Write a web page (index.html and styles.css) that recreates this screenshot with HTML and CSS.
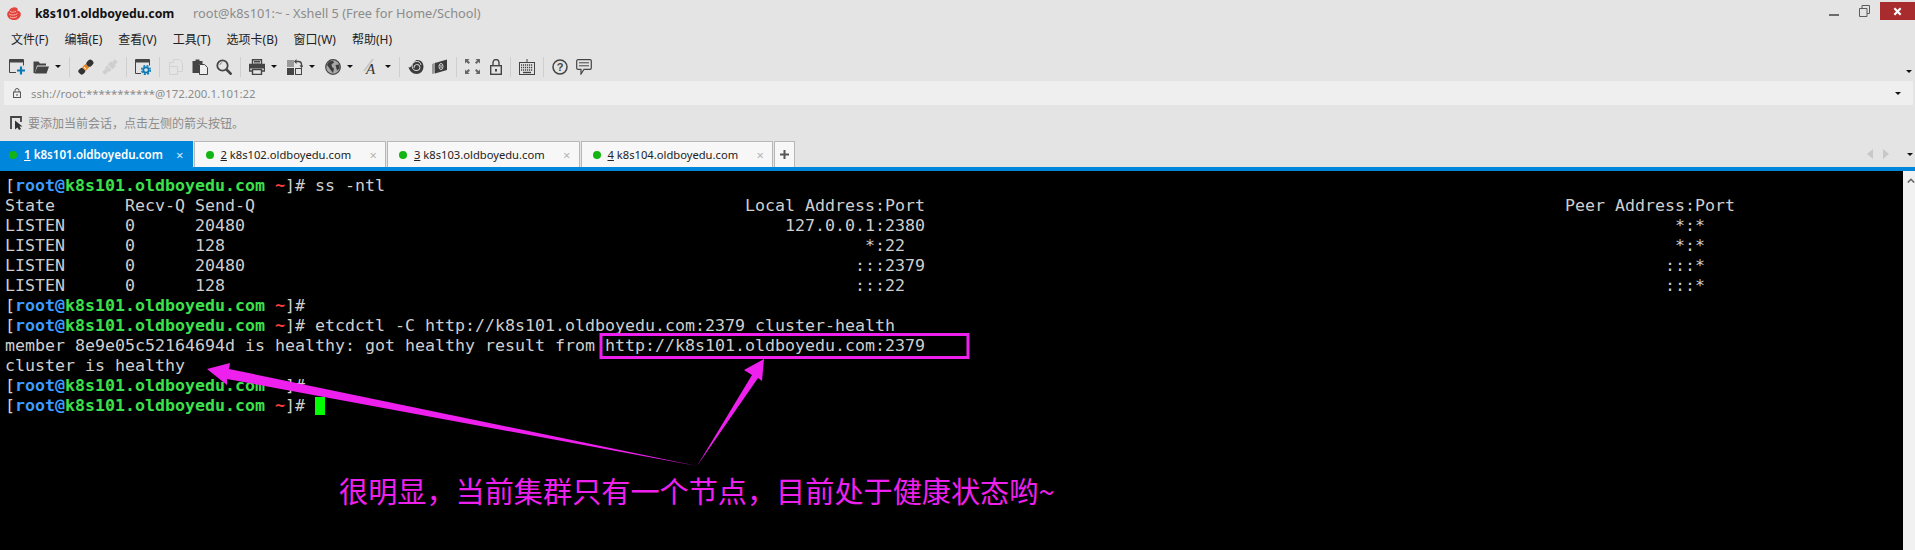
FILE: index.html
```html
<!DOCTYPE html>
<html lang="zh-CN">
<head>
<meta charset="utf-8">
<title>Xshell 5</title>
<link rel="stylesheet" href="styles.css">
</head>
<body>
<div class="app">
  <header class="titlebar">
    <svg class="logo" viewBox="0 0 16 16"><path d="M3 5C4 1.500 9 .5 11 2c1 .8 1 2 .3 2.700 2.500 0 3.700 1.800 3.500 3.800C14.500 12 11 14.500 7 14 3.500 13.500 1 11 1.200 8 1.300 6.500 2 5.500 3 5z" fill="#e2453e"/><path d="M3 8c2 1.500 6 1.500 8.500-.5M4 5.500c2 1 4 .8 6-.3M4 11c2 1 5 1 7-.5" stroke="#f7b0a8" fill="none" stroke-width="1"/></svg>
    <span class="host-title">k8s101.oldboyedu.com</span>
    <span class="window-title">root@k8s101:~ - Xshell 5 (Free for Home/School)</span>
    <div class="window-controls">
      <svg class="win-min" viewBox="0 0 10 12"><rect x="0" y="8" width="10" height="2" fill="#6b6b6b"/></svg>
      <svg class="win-restore" viewBox="0 0 11 12"><path d="M.5 3.500h7.500v8H.5zM3 3.500V.5h7.500v8H8" fill="none" stroke="#5c5c5c"/></svg>
      <div class="win-close"><svg viewBox="0 0 10 10"><path d="M1.500 1.500l7 7M8.500 1.500l-7 7" stroke="#fff" stroke-width="2.400"/></svg></div>
    </div>
  </header>

  <nav class="menubar">
    <span>文件(F)</span><span>编辑(E)</span><span>查看(V)</span><span>工具(T)</span><span>选项卡(B)</span><span>窗口(W)</span><span>帮助(H)</span>
  </nav>

  <div class="toolbar">
    <svg class="ic" viewBox="0 0 16 16"><path d="M.5 13.500V.5h14v6M.5 13.500H7" fill="none" stroke="#444"/><rect x="1" y="1" width="13" height="2.500" fill="#444"/><path d="M12 7.500v8M8 11.500h8" stroke="#0b78b6" stroke-width="2.200"/></svg>
    <svg class="ic" viewBox="0 0 16 16"><path d="M.5 14V2.500h5l1.500 2h6v2H4L1.800 14z" fill="#444"/><path d="M4.500 7.500H16L13.500 14.500H1.500z" fill="#444"/></svg>
    <i class="caret"></i><i class="sep"></i>
    <svg class="ic" viewBox="0 0 16 16"><g transform="rotate(-45 8 8)"><rect x="-1" y="5" width="6" height="6" rx="2" fill="#333"/><rect x="5" y="5.500" width="5" height="5" fill="#e8851f"/><rect x="10" y="5" width="7" height="6" rx="2.500" fill="#333"/><path d="M6.500 6.500v3" stroke="#fff"/></g></svg>
    <svg class="ic" viewBox="0 0 16 16"><g transform="rotate(-45 8 8)" fill="#cfcfcf"><rect x="-1" y="6" width="5" height="4"/><rect x="4" y="5" width="3" height="6"/><rect x="8" y="4.500" width="5" height="7" rx="1"/><rect x="13" y="6" width="4" height="4"/></g></svg>
    <i class="sep"></i>
    <svg class="ic" viewBox="0 0 16 16"><path d="M.5 14.500V.5h14v6M.5 14.500H6" fill="none" stroke="#444"/><rect x="1" y="1" width="13" height="2.500" fill="#444"/><circle cx="11" cy="11" r="2.700" fill="none" stroke="#0b78b6" stroke-width="1.800"/><circle cx="11" cy="11" r="4.300" fill="none" stroke="#0b78b6" stroke-width="1.500" stroke-dasharray="2 1.400"/></svg>
    <i class="sep"></i>
    <svg class="ic" viewBox="0 0 16 16"><path d="M1.500 3.500h4v-3h6l3 3v9h-5M1.500 3.500v12h8v-8h-8" fill="none" stroke="#d2d2d2" stroke-width="1"/></svg>
    <svg class="ic" viewBox="0 0 16 16"><path d="M.5 2h3V.5h4V2h3v3H7v9H.5z" fill="#444"/><path d="M7.500 5.500h5l3 3v7h-8z" fill="#eee" stroke="#444"/></svg>
    <svg class="ic" viewBox="0 0 16 16"><circle cx="6.500" cy="6.500" r="5.200" fill="none" stroke="#444" stroke-width="1.800"/><path d="M10.500 10.500L15.500 15.500" stroke="#444" stroke-width="2.600"/><path d="M3.800 6a3 3 0 0 1 2.500-2.500" stroke="#888" fill="none"/></svg>
    <i class="sep"></i>
    <svg class="ic" viewBox="0 0 16 16"><path d="M3.500 5V.8h9V5M3.500 12H.5V5.500h15V12h-3" fill="none" stroke="#444" stroke-width="1.400"/><path d="M5 2.500h6M5 4h6" stroke="#444"/><rect x="1" y="6" width="14" height="3.500" fill="#444"/><path d="M3.500 10.500h9v5h-9z" fill="none" stroke="#444" stroke-width="1.400"/></svg>
    <i class="caret"></i>
    <svg class="ic split" viewBox="0 0 16 16"><rect x="0" y="1" width="7" height="7" fill="#9a9a9a"/><rect x="0" y="9" width="7" height="7" fill="#444"/><rect x="8.500" y="9.500" width="6" height="6" fill="none" stroke="#444"/><path d="M8 2.500h3.500a3 3 0 0 1 3 3V7" fill="none" stroke="#444" stroke-width="1.300"/><path d="M9.500 0v5L7 2.500zM12.500 6.500h4L14.500 9z" fill="#444"/></svg>
    <i class="caret"></i>
    <svg class="ic split" viewBox="0 0 16 16"><circle cx="8" cy="8" r="7.300" fill="#a8a8a8" stroke="#444" stroke-width="1.200"/><path d="M4 2.500l4-.8 1 2-2.500 1.500L7 8l2 1.500-1 4.500-2-2.500L3.500 8 2 6zM10.500 6l3.500-.5.500 4-2.500 2z" fill="#3c3c3c"/></svg>
    <i class="caret"></i>
    <svg class="ic split" viewBox="0 0 16 16"><path d="M0 12L9 0h2L2 12z" fill="#c4c4c4"/><text class="font-glyph" x="3" y="14.500">A</text></svg>
    <i class="caret"></i><i class="sep"></i>
    <svg class="ic" viewBox="0 0 16 16"><path d="M.5 8C3 10 4 4 8 1.200c4-1 7.500 2 7.500 6.300 0 4.500-3 7.500-7 7.500C4.500 15 1.500 12 .5 8z" fill="#3d3d3d"/><path d="M6 9a3 3 0 1 1 3 2.500A4.500 4.500 0 1 1 13 6" fill="none" stroke="#ddd" stroke-width="1"/></svg>
    <svg class="ic" viewBox="0 0 16 16"><path d="M0 5l4-1.500V14l-4 1z" fill="#9a9a9a"/><path d="M3 4l12-3.500V11L3 14.500z" fill="#3d3d3d"/><ellipse cx="9" cy="7.500" rx="2" ry="3" fill="none" stroke="#ddd"/><path d="M9 6v3" stroke="#ddd"/></svg>
    <i class="sep"></i>
    <svg class="ic ic-wide" viewBox="0 0 15 15"><path d="M0 4.500V0h4.500L3 1.500l2 2L3.500 5l-2-2zM15 4.500V0h-4.500L12 1.500l-2 2L11.500 5l2-2zM0 10.500V15h4.500L3 13.500l2-2L3.500 10l-2 2zM15 10.500V15h-4.500L12 13.500l-2-2 1.500-1.500 2 2z" fill="#666"/></svg>
    <svg class="ic ic-lock split" viewBox="0 0 12 16"><rect x=".7" y="6.700" width="10.600" height="8.600" fill="none" stroke="#444" stroke-width="1.400"/><path d="M3 6.500V3.500a3 3 0 0 1 6 0v3" fill="none" stroke="#444" stroke-width="1.400"/><rect x="5" y="10" width="2" height="2.500" fill="#444"/></svg>
    <i class="sep"></i>
    <svg class="ic" viewBox="0 0 16 16"><path d="M8 0v3" stroke="#444"/><rect x=".5" y="3.500" width="15" height="12" fill="none" stroke="#444"/><path d="M2 6h12M2 8.500h12M2 11h12" stroke="#444" stroke-width="1.400" stroke-dasharray="1.200 .8"/><path d="M4 13.500h8" stroke="#444" stroke-width="1.400"/></svg>
    <i class="sep"></i>
    <svg class="ic" viewBox="0 0 16 16"><circle cx="8" cy="8" r="7" fill="none" stroke="#444" stroke-width="1.500"/><text class="help-glyph" x="8" y="12">?</text></svg>
    <svg class="ic" viewBox="0 0 16 16"><path d="M2 .7h12a1.300 1.300 0 0 1 1.300 1.300v7A1.300 1.300 0 0 1 14 10.300H8L5 15v-4.700H2A1.300 1.300 0 0 1 .7 9V2A1.300 1.300 0 0 1 2 .7z" fill="none" stroke="#444" stroke-width="1.200"/><path d="M3 3.800h10M3 6.800h10" stroke="#444"/></svg>
    <i class="caret caret-far"></i>
  </div>

  <div class="addressbar">
    <svg class="addr-lock" viewBox="0 0 8 10"><rect x=".5" y="4" width="7" height="5.500" fill="none" stroke="#555"/><path d="M2 4V2.500a2 2 0 0 1 4 0V4" fill="none" stroke="#555"/><rect x="3.500" y="6" width="1" height="2" fill="#555"/></svg>
    <span class="addr-text">ssh://root:***********@172.200.1.101:22</span>
    <i class="caret caret-end"></i>
  </div>

  <div class="hintbar">
    <svg class="hint-icon" viewBox="0 0 13 14"><path d="M1 13V1h10v5" fill="none" stroke="#444" stroke-width="1.800"/><path d="M5 4.500v9l2.500-2 1.500 2.500 2-1-1.500-2.500 3 0z" fill="#333"/></svg>
    <span>要添加当前会话，点击左侧的箭头按钮。</span>
  </div>

  <div class="tabbar">
    <div class="tab tab-active"><i class="dot"></i><span class="tab-label"><u>1</u> k8s101.oldboyedu.com</span><span class="tab-x">×</span></div>
    <div class="tab"><i class="dot"></i><span class="tab-label"><u>2</u> k8s102.oldboyedu.com</span><span class="tab-x">×</span></div>
    <div class="tab"><i class="dot"></i><span class="tab-label"><u>3</u> k8s103.oldboyedu.com</span><span class="tab-x">×</span></div>
    <div class="tab"><i class="dot"></i><span class="tab-label"><u>4</u> k8s104.oldboyedu.com</span><span class="tab-x">×</span></div>
    <div class="tab tab-add"><svg viewBox="0 0 9 9"><path d="M4.500 0v9M0 4.500h9" stroke="#555" stroke-width="2"/></svg></div>
    <div class="tab-nav">
      <svg viewBox="0 0 6 10"><path d="M6 0v10L0 5z" fill="#c8c8c8"/></svg>
      <svg viewBox="0 0 6 10"><path d="M0 0v10l6-5z" fill="#c8c8c8"/></svg>
      <i class="caret"></i>
    </div>
  </div>

  <main class="terminal">
<pre class="screen"><span class="w">[</span><b class="u">root@</b><b class="h">k8s101.oldboyedu.com</b> <b class="t">~</b><span class="w">]#</span> ss -ntl
State       Recv-Q Send-Q                                                 Local Address:Port                                                                Peer Address:Port
LISTEN      0      20480                                                      127.0.0.1:2380                                                                           *:*
LISTEN      0      128                                                                *:22                                                                             *:*
LISTEN      0      20480                                                             :::2379                                                                          :::*
LISTEN      0      128                                                               :::22                                                                            :::*
<span class="w">[</span><b class="u">root@</b><b class="h">k8s101.oldboyedu.com</b> <b class="t">~</b><span class="w">]#</span>
<span class="w">[</span><b class="u">root@</b><b class="h">k8s101.oldboyedu.com</b> <b class="t">~</b><span class="w">]#</span> etcdctl -C http://k8s101.oldboyedu.com:2379 cluster-health
member 8e9e05c52164694d is healthy: got healthy result from http://k8s101.oldboyedu.com:2379
cluster is healthy
<span class="w">[</span><b class="u">root@</b><b class="h">k8s101.oldboyedu.com</b> <b class="t">~</b><span class="w">]#</span>
<span class="w">[</span><b class="u">root@</b><b class="h">k8s101.oldboyedu.com</b> <b class="t">~</b><span class="w">]#</span> <i class="cursor"></i></pre>
    <aside class="scrollbar"><svg viewBox="0 0 8 5"><path d="M.8 4.500L4 1.300l3.200 3.200" fill="none" stroke="#666" stroke-width="1.600"/></svg></aside>
    <svg class="markup" viewBox="0 171 1915 379">
      <rect x="601" y="334.500" width="367" height="23" fill="none" stroke="#ee20ee" stroke-width="3"/>
      <path d="M207 369L230 363 229 369 697 466 227 379 227 385z" fill="#ee20ee"/>
      <path d="M764 359L744 370 752 375 697 466 758 378 762 381z" fill="#ee20ee"/>
    </svg>
    <p class="note">很明显，当前集群只有一个节点，目前处于健康状态哟~</p>
  </main>
</div>
</body>
</html>
```

FILE: styles.css
```css
* { box-sizing: border-box; }
html, body { margin: 0; padding: 0; background: #e4e4e4; }
body { font-family: "Open Sans", "Noto Sans CJK SC", sans-serif; }
.app { width: 1915px; height: 550px; display: flex; flex-direction: column; overflow: hidden; background: #e4e4e4; }

.titlebar { height: 30px; flex: none; display: flex; align-items: center; font-family: "Noto Sans", "Noto Sans CJK SC", sans-serif; position: relative; }
.logo { width: 16px; height: 16px; margin: -3px 0 0 6px; }
.host-title { margin-left: 13px; font-size: 12.300px; font-weight: 700; color: #111; margin-top: -4px; width: 158px; white-space: nowrap; }
.window-title { font-size: 12.750px; color: #8b8b8b; margin-top: -4px; white-space: nowrap; }
.window-controls { margin-left: auto; align-self: flex-start; display: flex; align-items: flex-start; }
.win-min { width: 10px; height: 12px; margin: 6px 20px 0 0; }
.win-restore { width: 11px; height: 12px; margin: 5px 10px 0 0; }
.win-close { width: 35px; height: 18px; margin-top: 2px; background: #a82c2e; display: flex; align-items: center; justify-content: center; }
.win-close svg { width: 9px; height: 9px; }

.menubar { height: 22px; flex: none; display: flex; align-items: center; gap: 16px; padding: 0 0 4px 11px; font-size: 12px; color: #222; font-family: "Noto Sans", "Noto Sans CJK SC", sans-serif; }

.toolbar { height: 29px; flex: none; display: flex; align-items: center; gap: 8px; padding-left: 9px; position: relative; }
.ic { width: 16px; height: 16px; flex: none; }
.ic-wide { width: 15px; height: 15px; }
.ic-lock { width: 12px; height: 16px; }
.split { margin-left: 2px; }
.sep { width: 1px; height: 20px; background: #cfcfcf; flex: none; }
.caret { width: 0; height: 0; flex: none; border-left: 3px solid transparent; border-right: 3px solid transparent; border-top: 3px solid #111; margin-left: -2px; }
.caret-far { position: absolute; right: 3px; top: 18px; }
.caret-end { margin-left: auto; margin-right: 12px; }
.font-glyph { font: italic 15px "Liberation Serif", serif; fill: #333; }
.help-glyph { font: 700 11px "Liberation Sans", sans-serif; fill: #444; text-anchor: middle; }

.addressbar { height: 24px; flex: none; margin: 0 2px 0 4px; background: #efefef; display: flex; align-items: center; padding-left: 9px; font-size: 11.400px; color: #8c8c8c; font-family: "Noto Sans", sans-serif; }
.addr-lock { width: 8px; height: 10px; }
.addr-text { margin-left: 10px; }

.hintbar { height: 36px; flex: none; display: flex; align-items: center; padding: 0 0 2px 10px; font-size: 12px; color: #8c8c8c; font-family: "Noto Sans CJK SC", sans-serif; }
.hint-icon { width: 13px; height: 14px; margin-right: 5px; margin-top: 1px; }

.tabbar { height: 30px; flex: none; display: flex; gap: 1px; border-bottom: 4px solid #0087dc; }
.tab { width: 192.500px; height: 26px; flex: none; background: #f7f7f7; border: 1px solid #b8b8b8; border-bottom: 0; display: flex; align-items: center; padding-left: 11px; font-size: 11.200px; color: #222; font-family: "Noto Sans", sans-serif; }
.tab-active { background: #0087dc; border-color: #0087dc; color: #fff; font-weight: 600; font-size: 11.600px; padding-left: 8px; }
.dot { width: 8px; height: 8px; border-radius: 50%; background: #12b512; flex: none; }
.tab-label { margin-left: 7px; width: 149px; white-space: nowrap; }
.tab-active .tab-label { width: 152px; }
.tab-x { color: #b5b5b5; font-size: 13px; font-weight: 400; }
.tab-active .tab-x { color: #d8ecfa; }
.tab-add { width: 21px; padding: 0; justify-content: center; }
.tab-add svg { width: 9px; height: 9px; }
.tab-nav { margin-left: auto; display: flex; align-items: center; gap: 10px; padding-right: 2px; height: 26px; }
.tab-nav svg { width: 6px; height: 10px; }
.tab-nav .caret { margin-left: 8px; }

.terminal { flex: 1; background: #000; display: flex; position: relative; min-height: 0; }
.screen { margin: 0; padding: 5px 0 0 5px; flex: 1; font: 16.610px/20px "DejaVu Sans Mono", monospace; color: #cfcfcf; }
.screen b { font-weight: 700; }
.u { color: #3c9cff; }
.h { color: #3ce04c; }
.t { color: #ff4040; }
.w { color: #d0d0d0; }
.cursor { display: inline-block; width: 10px; height: 18px; background: #00ff00; vertical-align: -4px; }
.scrollbar { width: 12px; flex: none; background: #f1f1f1; padding: 7px 0 0 4px; }
.scrollbar svg { display: block; width: 8px; height: 5px; }
.markup { position: absolute; left: 0; top: 0; width: 1915px; height: 379px; pointer-events: none; }
.note { position: absolute; left: 339px; top: 298px; margin: 0; font: 29.150px/42px "Noto Sans CJK SC", sans-serif; color: #ee20ee; white-space: nowrap; }
```
